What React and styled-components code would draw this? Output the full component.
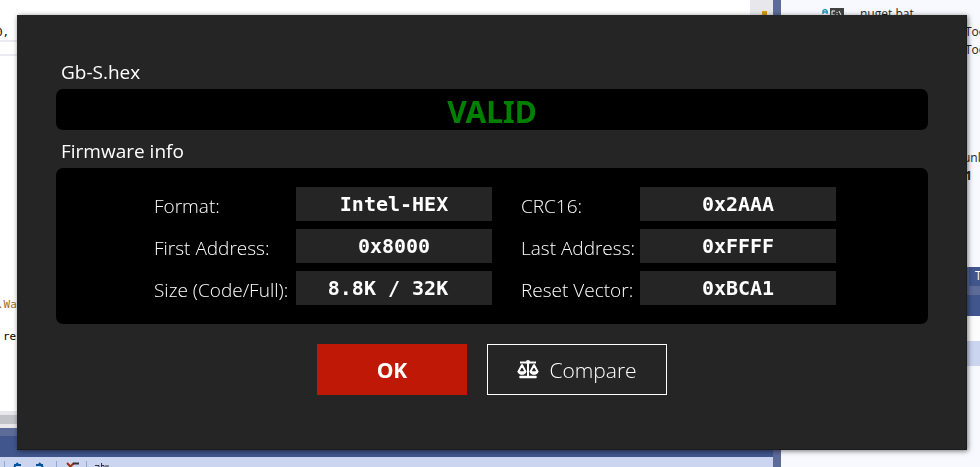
import React from "react";
import styled, { createGlobalStyle } from "styled-components";

const ui = `"Open Sans", "Noto Sans", sans-serif`;
const mono = `"DejaVu Sans Mono", "Liberation Mono", monospace`;

const GlobalStyle = createGlobalStyle`
  *, *::before, *::after { box-sizing: border-box; }
  html, body, #root { height: 100%; }
  body { margin: 0; overflow: hidden; background: #f7f9fe; font-family: ${ui}; }
`;

const Workspace = styled.div`
  display: flex;
  height: 100vh;
  overflow: hidden;
  color: #1e1e1e;
`;

const EditorPane = styled.section`
  flex: 1;
  min-width: 0;
  display: flex;
  flex-direction: column;
`;

const EditorArea = styled.div`
  flex: 1;
  min-height: 0;
  display: flex;
  background: #fff;
`;

const Code = styled.div`
  flex: 1;
  padding-top: 25px;
  overflow: hidden;
  font: 11px/15px ${mono};
`;

const CodeLine = styled.div`
  height: 15px;
  text-indent: ${(p) => p.$indent || 0}px;
  color: ${(p) => p.$color || "#000"};
  margin-top: ${(p) => p.$before || 0}px;
  white-space: pre;
`;

const CurrentLine = styled.div`
  height: 16px;
  border: solid #eaeaf2;
  border-width: 2px 0;
`;

const ScrollTrack = styled.div`
  width: 23px;
  padding: 11px 0 0 12px;
  background: #e8e8ec;
`;

const ChangeMark = styled.div`
  width: 5px;
  height: 5px;
  background: #d9951a;
`;

const HorizontalScroll = styled.div`
  height: 17px;
  border: solid #e8e8ec;
  border-width: 4px 0;
  background: #c2c3c9;
`;

const Splitter = styled.div`
  flex: none;
  height: ${(p) => (p.$vertical ? "auto" : "8px")};
  width: ${(p) => (p.$vertical ? "8px" : "auto")};
  background: #5d6b99;
`;

const PanelHeader = styled.div`
  height: 21px;
  background: #40568d;
`;

const Toolbar = styled.div`
  display: flex;
  gap: 8px;
  height: 10px;
  padding: 4px 0 0 4px;
  overflow: hidden;
  background: #ccd5f0;
`;

const Divider = styled.span`
  width: 1px;
  height: 12px;
  background: #8fa5d4;
`;

const Explorer = styled.aside`
  flex: none;
  width: 199px;
  overflow: hidden;
  background: #f7f9fe;
  font: 12px/18px ${ui};
`;

const FileRow = styled.div`
  display: flex;
  align-items: center;
  gap: 2px;
  height: 18px;
  margin-top: ${(p) => p.$before || 0}px;
  padding-left: ${(p) => p.$indent}px;
  font-weight: ${(p) => (p.$bold ? 700 : 400)};
  white-space: nowrap;
`;

const FileName = styled.span`
  padding-left: 14px;
`;

const Tab = styled.div`
  height: 19px;
  padding-left: 6px;
  margin-left: 182px;
  border-left: 6px solid #5d6b99;
  background: #40568d;
  color: #fff;
`;

const Strip = styled.div`
  height: ${(p) => p.$height}px;
  background: ${(p) => p.$color};
`;

const Dialog = styled.main`
  position: fixed;
  inset: 15px 13px 17px 17px;
  display: flex;
  flex-direction: column;
  padding: 36px 39px;
  background: #252525;
  box-shadow: 1px 1px 5px rgba(0, 0, 0, 0.55), inset -1px -1px 0 #1c1c1c;
  color: #fff;
`;

const Heading = styled.h2`
  margin: 0;
  padding: 2px 5px 0;
  height: 38px;
  font: 400 19px/38px ${ui};
`;

const Status = styled.div`
  height: 41px;
  padding-top: 2px;
  border-radius: 7px;
  background: #000;
  color: #008000;
  font: 700 30px/41px "Noto Sans", sans-serif;
  text-align: center;
`;

const FieldLabel = styled.label`
  height: 34px;
  padding-top: 2px;
  font: 300 19px/34px ${ui};
  white-space: nowrap;
`;

const FieldValue = styled.output`
  height: 34px;
  background: #252525;
  font: 700 20px/34px ${mono};
  text-align: center;
  white-space: pre;
`;

const Fields = styled.div`
  display: grid;
  grid-template-columns: 142px 196px 29px 119px 196px;
  row-gap: 8px;
  justify-content: center;
  padding: 19px 0 19px 6px;
  border-radius: 7px;
  background: #000;

  ${FieldLabel}:nth-child(4n + 3) {
    grid-column: 4;
  }
`;

const Actions = styled.div`
  display: flex;
  justify-content: center;
  gap: 20px;
  margin-top: 20px;
`;

const Button = styled.button`
  display: flex;
  align-items: center;
  justify-content: center;
  gap: 10px;
  width: ${(p) => (p.$primary ? 150 : 180)}px;
  height: 51px;
  padding: 0;
  border: 1px solid ${(p) => (p.$primary ? "#bf1807" : "#fff")};
  background: ${(p) => (p.$primary ? "#bf1807" : "transparent")};
  color: #fff;
  font: ${(p) => (p.$primary ? 700 : 300)} 21px/30px ${ui};
`;

const ScaleIcon = () => (
  <svg width="22" height="19" viewBox="0 0 22 19" fill="none" stroke="#fff" aria-hidden="true">
    <path d="M3 2.500h16" strokeWidth="2" />
    <path d="M11 1v15" strokeWidth="2" />
    <circle cx="11" cy="2" r="2" fill="#fff" stroke="none" />
    <path d="M3.500 17h15" strokeWidth="2.600" strokeLinecap="round" />
    <path d="M5 5L1.500 11.500Q5 15.500 8.500 11.500L5 5ZM17 5L13.500 11.500Q17 15.500 20.500 11.500L17 5Z" strokeWidth="1.900" strokeLinejoin="round" />
    <path d="M.5 11.300h9c-.5 2.500-2.200 3.500-4.500 3.500s-4-1-4.500-3.500ZM12.500 11.300h9c-.5 2.500-2.200 3.500-4.500 3.500s-4-1-4.500-3.500Z" fill="#fff" stroke="none" />
  </svg>
);

const ToolIcons = () => (
  <svg width="110" height="6" viewBox="0 0 110 6" fill="none" aria-hidden="true">
    <path d="M5 2L1 6M1 4h7" stroke="#00539c" strokeWidth="2" />
    <path d="M26 2l4 4M23 4h7" stroke="#00539c" strokeWidth="2" />
    <path d="M43.500 0v6M73.500 0v6" stroke="#8fa5d4" />
    <path d="M54 2l4 4M61 2l-4 4" stroke="#a82b16" strokeWidth="2" />
    <path d="M60 2.500h6" stroke="#333" strokeWidth="2" />
    <path d="M82 4.500h4v2M88.500 2v4M88 4.500h3v2M92 5h4" stroke="#333" />
  </svg>
);

const BatchIcon = () => (
  <svg width="22" height="14" viewBox="0 0 22 14" fill="none" aria-hidden="true">
    <path d="M1 7V4q2-3 4 0v3M1 5h5" stroke="#2a98bd" strokeWidth="1.500" />
    <path d="M8 1h14v13H8z" fill="#424242" />
    <path d="M13 4h-3v4h3M15 5v1M15 7v1M17 4l2 4" stroke="#fff" />
  </svg>
);

const fields = [
  ["format", "Format:", "Intel-HEX"],
  ["crc", "CRC16:", "0x2AAA"],
  ["first", "First Address:", "0x8000"],
  ["last", "Last Address:", "0xFFFF"],
  ["size", "Size (Code/Full):", "8.8K / 32K\u00a0"],
  ["reset", "Reset Vector:", "0xBCA1"],
];

export default function App() {
  return (
    <>
      <GlobalStyle />
      <Workspace>
        <EditorPane>
          <EditorArea>
            <Code>
              <CodeLine $indent={-4}>0,</CodeLine>
              <CurrentLine />
              <CodeLine $before={241} $indent={-3} $color="#a36b1f">.Wa</CodeLine>
              <CodeLine $before={17} $indent={3}>re</CodeLine>
            </Code>
            <ScrollTrack>
              <ChangeMark />
            </ScrollTrack>
          </EditorArea>
          <HorizontalScroll />
          <Splitter />
          <PanelHeader />
          <Toolbar>
            <Divider />
            <ToolIcons />
          </Toolbar>
        </EditorPane>
        <Splitter $vertical />
        <Explorer>
          <Strip $height={5} $color="transparent" />
          <FileRow $indent={41}>
            <BatchIcon />
            <FileName>nuget.bat</FileName>
          </FileRow>
          <FileRow $indent={184}>Too</FileRow>
          <FileRow $indent={184}>Too</FileRow>
          <FileRow $indent={182} $before={90}>unl</FileRow>
          <FileRow $indent={184} $bold>1</FileRow>
          <Strip $height={82} $color="transparent" />
          <Tab>T</Tab>
          <Strip $height={9} $color="#5d6b99" />
          <Strip $height={21} $color="#40568d" />
          <Strip $height={25} $color="#fcfcfc" />
          <Strip $height={25} $color="#ccd5f0" />
        </Explorer>
      </Workspace>
      <Dialog>
        <Heading>Gb-S.hex</Heading>
        <Status role="status">VALID</Status>
        <Heading>Firmware info</Heading>
        <Fields>
          {fields.map(([id, label, value]) => (
            <React.Fragment key={id}>
              <FieldLabel htmlFor={id}>{label}</FieldLabel>
              <FieldValue id={id}>{value}</FieldValue>
            </React.Fragment>
          ))}
        </Fields>
        <Actions>
          <Button type="button" $primary>OK</Button>
          <Button type="button">
            <ScaleIcon />
            Compare
          </Button>
        </Actions>
      </Dialog>
    </>
  );
}
